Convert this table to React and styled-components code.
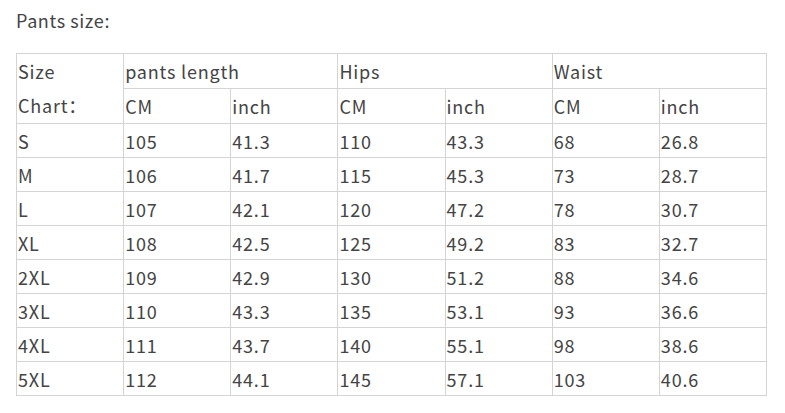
import React from 'react'
import styled, { createGlobalStyle } from 'styled-components'

const Global = createGlobalStyle`
body {
  margin: 0;
  background: #fff;
}
`

const Page = styled.div`
padding: 6px 0 0 16px;
font-family: "Noto Sans CJK SC", "Noto Sans", sans-serif;
color: #444;
`

const Title = styled.div`
font-size: 18px;
line-height: 28px;
height: 47px;
letter-spacing: 0.6px;
`

const Table = styled.table`
border-collapse: collapse;
table-layout: fixed;
width: 751px;
font-size: 18px;
letter-spacing: 0.8px;
`

const Cell = styled.td`
border: 1px solid #d4d4d4;
height: 34px;
box-sizing: border-box;
padding: 1px 0 0 1px;
text-align: left;
vertical-align: middle;
white-space: nowrap;
line-height: 20px;
`

const SizeCell = styled(Cell)`
vertical-align: top;
padding-top: 0;
line-height: 34.4px;
`

const rows = [
  ['S', 105, 41.3, 110, 43.3, 68, 26.8],
  ['M', 106, 41.7, 115, 45.3, 73, 28.7],
  ['L', 107, 42.1, 120, 47.2, 78, 30.7],
  ['XL', 108, 42.5, 125, 49.2, 83, 32.7],
  ['2XL', 109, 42.9, 130, 51.2, 88, 34.6],
  ['3XL', 110, 43.3, 135, 53.1, 93, 36.6],
  ['4XL', 111, 43.7, 140, 55.1, 98, 38.6],
  ['5XL', 112, 44.1, 145, 57.1, 103, 40.6],
]

const App = () => {
  return (
    <Page>
      <Global />
      <Title>Pants size:</Title>
      <Table>
        <colgroup>
          {[0, 1, 2, 3, 4, 5, 6].map(i => <col key={i} style={{ width: 107 }} />)}
        </colgroup>
        <tbody>
          <tr>
            <SizeCell rowSpan={2}>Size<br />Chart：</SizeCell>
            <Cell colSpan={2}>pants length</Cell>
            <Cell colSpan={2}>Hips</Cell>
            <Cell colSpan={2}>Waist</Cell>
          </tr>
          <tr>
            <Cell>CM</Cell>
            <Cell>inch</Cell>
            <Cell>CM</Cell>
            <Cell>inch</Cell>
            <Cell>CM</Cell>
            <Cell>inch</Cell>
          </tr>
          {rows.map(r => (
            <tr key={r[0]}>
              {r.map((v, i) => (
                <Cell key={i}>{typeof v === 'number' && i % 2 === 0 ? v.toFixed(1) : v}</Cell>
              ))}
            </tr>
          ))}
        </tbody>
      </Table>
    </Page>
  )
}

export default App
